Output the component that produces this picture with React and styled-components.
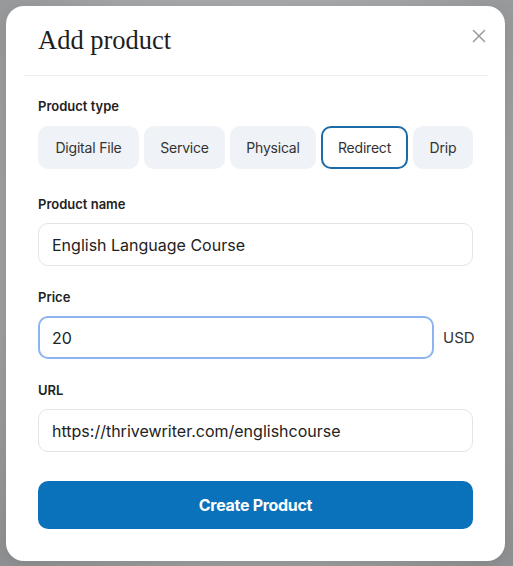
import React, { useState } from "react";
import styled, { createGlobalStyle } from "styled-components";

const Global = createGlobalStyle`
  * { box-sizing: border-box; }
  html, body { margin: 0; padding: 0; }
  body {
    width: 513px;
    height: 566px;
    overflow: hidden;
    background: radial-gradient(ellipse at 50% 40%, #b4b6b8 0%, #a4a6a8 60%, #8f9193 100%);
    font-family: Inter, "Noto Sans", sans-serif;
  }
`;

const Overlay = styled.div`
  padding: 6px 8px 5px 6px;
`;

const Card = styled.div`
  width: 499px;
  height: 555px;
  background: #fff;
  border-radius: 18px;
  box-shadow: 0 4px 18px rgba(0, 0, 0, 0.12);
  display: flex;
  flex-direction: column;
`;

const Header = styled.div`
  margin: 0 17px 0 18px;
  padding: 19px 2px 20px 14px;
  border-bottom: 1px solid #eeeeef;
  display: flex;
  align-items: center;
  justify-content: space-between;
`;

const Title = styled.h2`
  margin: 0;
  font-family: "Liberation Serif", "DejaVu Serif", serif;
  font-weight: 400;
  font-size: 26.5px;
  line-height: 30px;
  color: #1d1d1f;
`;

const Close = styled.button`
  border: 0;
  background: none;
  padding: 0;
  width: 14px;
  height: 14px;
  margin-top: -9px;
  display: flex;
  cursor: pointer;
`;

const Body = styled.div`
  padding: 22px 32px 0 32px;
  display: flex;
  flex-direction: column;
`;

const Label = styled.div`
  font-size: 13px;
  line-height: 16px;
  font-weight: 600;
  color: #222;
  margin-bottom: ${(p) => p.$mb || 11}px;
`;

const Field = styled.div`
  margin-bottom: ${(p) => p.$mb || 23}px;
`;

const TypeRow = styled.div`
  display: flex;
  gap: 5px;
`;

const TypeButton = styled.button`
  flex: none;
  width: ${(p) => p.$w}px;
  height: 43px;
  padding: 0;
  white-space: nowrap;
  border-radius: 10px;
  font-family: Inter, "Noto Sans", sans-serif;
  font-size: 14px;
  letter-spacing: -0.2px;
  color: #333;
  background: ${(p) => (p.$active ? "#fff" : "#eff2f6")};
  border: 2px solid ${(p) => (p.$active ? "#1c6aa6" : "#eff2f6")};
  cursor: pointer;
`;

const Input = styled.input`
  width: 100%;
  height: 43px;
  padding: 0 13px;
  border-radius: 10px;
  border: 1.5px solid ${(p) => (p.$focus ? "#8db4ee" : "#e4e4e7")};
  ${(p) => p.$focus && "border-width: 2px; padding: 0 12px;"}
  font-family: Inter, "Noto Sans", sans-serif;
  font-size: 16px;
  color: #222;
  outline: none;
  background: #fff;
`;

const PriceRow = styled.div`
  display: flex;
  align-items: center;
  gap: 9px;
`;

const PriceInput = styled(Input)`
  width: 396px;
  flex: none;
`;

const Unit = styled.span`
  font-size: 15px;
  color: #333;
`;

const Submit = styled.button`
  margin-top: 6px;
  height: 48px;
  width: 100%;
  border: 0;
  border-radius: 10px;
  background: #0a72bb;
  color: #fff;
  font-family: Inter, "Noto Sans", sans-serif;
  font-weight: 700;
  font-size: 16px;
  letter-spacing: -0.3px;
  cursor: pointer;
`;

const types = [
  { name: "Digital File", w: 101 },
  { name: "Service", w: 81 },
  { name: "Physical", w: 86 },
  { name: "Redirect", w: 87 },
  { name: "Drip", w: 60 },
];

export default function App() {
  const [type, setType] = useState("Redirect");
  const [name, setName] = useState("English Language Course");
  const [price, setPrice] = useState("20");
  const [url, setUrl] = useState("https://thrivewriter.com/englishcourse");

  return (
    <>
      <Global />
      <Overlay>
        <Card>
          <Header>
            <Title>Add product</Title>
            <Close aria-label="Close">
              <svg width="14" height="14" viewBox="0 0 14 14">
                <path d="M1.5 1.5 L12.5 12.5 M12.5 1.5 L1.5 12.5" stroke="#9a9a9a" strokeWidth="1.5" strokeLinecap="round" />
              </svg>
            </Close>
          </Header>
          <Body>
            <Field $mb={27}>
              <Label $mb={12}>Product type</Label>
              <TypeRow>
                {types.map((t) => (
                  <TypeButton
                    key={t.name}
                    $w={t.w}
                    $active={type === t.name}
                    onClick={() => setType(t.name)}
                  >
                    {t.name}
                  </TypeButton>
                ))}
              </TypeRow>
            </Field>
            <Field>
              <Label>Product name</Label>
              <Input value={name} onChange={(e) => setName(e.target.value)} />
            </Field>
            <Field>
              <Label>Price</Label>
              <PriceRow>
                <PriceInput $focus value={price} onChange={(e) => setPrice(e.target.value)} />
                <Unit>USD</Unit>
              </PriceRow>
            </Field>
            <Field>
              <Label>URL</Label>
              <Input value={url} onChange={(e) => setUrl(e.target.value)} />
            </Field>
            <Submit>Create Product</Submit>
          </Body>
        </Card>
      </Overlay>
    </>
  );
}
